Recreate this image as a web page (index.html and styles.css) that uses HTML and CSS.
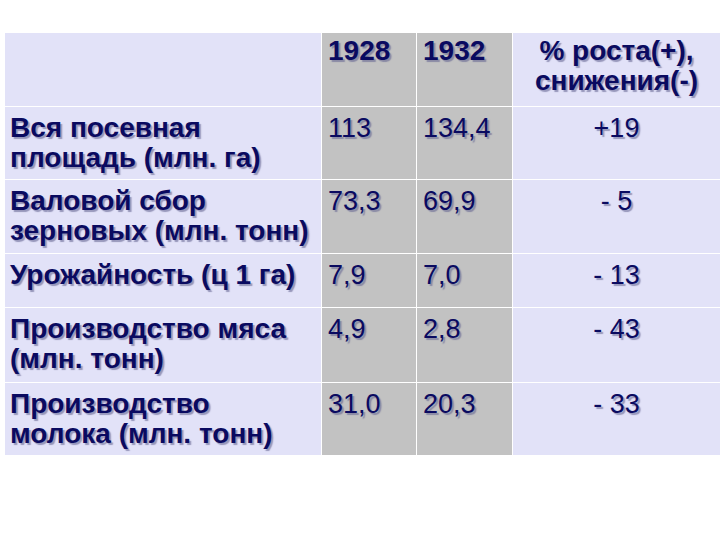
FILE: index.html
```html
<!DOCTYPE html>
<html lang="ru">
<head>
<meta charset="utf-8">
<title>Сельское хозяйство 1928–1932</title>
<link rel="stylesheet" href="styles.css">
</head>
<body>
<div class="page">
  <table class="stats">
    <colgroup>
      <col class="c-label">
      <col class="c-year">
      <col class="c-year2">
      <col class="c-pct">
    </colgroup>
    <tr class="r-head">
      <td class="label"></td>
      <td class="num bold">1928</td>
      <td class="num bold">1932</td>
      <td class="pct bold">% роста(+),<br>снижения(-)</td>
    </tr>
    <tr class="r-2">
      <td class="label">Вся посевная<br>площадь (млн. га)</td>
      <td class="num">113</td>
      <td class="num">134,4</td>
      <td class="pct">+19</td>
    </tr>
    <tr class="r-3">
      <td class="label">Валовой сбор<br>зерновых (млн. тонн)</td>
      <td class="num">73,3</td>
      <td class="num">69,9</td>
      <td class="pct">- 5</td>
    </tr>
    <tr class="r-4">
      <td class="label">Урожайность (ц 1 га)</td>
      <td class="num">7,9</td>
      <td class="num">7,0</td>
      <td class="pct">- 13</td>
    </tr>
    <tr class="r-5">
      <td class="label">Производство мяса<br>(млн. тонн)</td>
      <td class="num">4,9</td>
      <td class="num">2,8</td>
      <td class="pct">- 43</td>
    </tr>
    <tr class="r-6">
      <td class="label">Производство<br>молока (млн. тонн)</td>
      <td class="num">31,0</td>
      <td class="num">20,3</td>
      <td class="pct">- 33</td>
    </tr>
  </table>
</div>
</body>
</html>
```

FILE: styles.css
```css
html, body {
  margin: 0;
  padding: 0;
  background: #ffffff;
}

.page {
  width: 720px;
  height: 540px;
  padding: 32px 0 0 4px;
  box-sizing: border-box;
  overflow: hidden;
}

.stats {
  border-collapse: collapse;
  table-layout: fixed;
  width: 716px;
  font-family: "Liberation Sans", Arial, sans-serif;
  font-size: 27px;
  line-height: 30px;
  color: #0a0a60;
  text-shadow: 2px 2px 1px rgba(100, 100, 145, 0.6);
}

.c-label { width: 317px; }
.c-year  { width: 95px; }
.c-year2 { width: 96px; }
.c-pct   { width: 208px; }

.stats td {
  border: 1px solid #ffffff;
  vertical-align: top;
  padding: 6px 0 0 6px;
  white-space: nowrap;
  overflow: visible;
}

.label {
  background: #e2e2f8;
  font-weight: bold;
  font-size: 28px;
  padding-left: 5px !important;
}

.num {
  background: #c2c2c2;
  font-weight: normal;
}

.pct {
  background: #e2e2f8;
  text-align: center;
  padding-left: 0 !important;
}

.bold {
  font-weight: bold;
  font-size: 28px;
}

.r-head td { padding-top: 3px; }

.r-head { height: 74px; }
.r-2 { height: 73px; }
.r-3 { height: 74px; }
.r-4 { height: 54px; }
.r-5 { height: 75px; }
.r-6 { height: 73px; }
```
